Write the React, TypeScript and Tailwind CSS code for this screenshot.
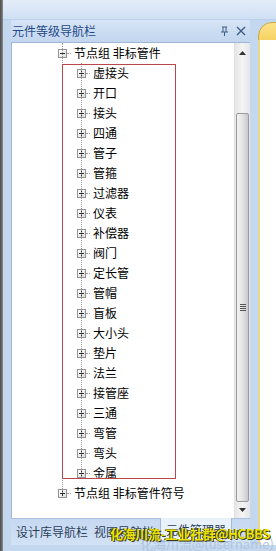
import React from 'react';

const children = [
  '虚接头', '开口', '接头', '四通', '管子', '管箍', '过滤器', '仪表', '补偿器', '阀门',
  '定长管', '管帽', '盲板', '大小头', '垫片', '法兰', '接管座', '三通', '弯管', '弯头', '金属',
];

function ExpandBox({ open }: { open?: boolean }) {
  return (
    <div className="w-[9px] h-[9px] flex-none border border-[#939393] bg-gradient-to-br from-white to-[#dcdcdc] flex items-center justify-center">
      <svg width="7" height="7" viewBox="0 0 7 7">
        <rect x="1" y="3" width="5" height="1" fill="#2b2b2b" />
        {!open && <rect x="3" y="1" width="1" height="5" fill="#2b2b2b" />}
      </svg>
    </div>
  );
}

function TreeRow({ label, open, indent }: { label: string; open?: boolean; indent: string }) {
  return (
    <div className={`h-[20px] flex items-center ${indent}`}>
      <ExpandBox open={open} />
      <div className="w-[4px] border-t border-dotted border-[#9a9a9a]" />
      <span className="ml-[3px] text-[12px] leading-none text-black whitespace-nowrap">{label}</span>
    </div>
  );
}

export default function App() {
  return (
    <div
      className="w-[276px] h-[551px] flex overflow-hidden bg-[#c3d7ef]"
      style={{ fontFamily: '"Noto Sans CJK SC", "Noto Sans", sans-serif' }}
    >
      {/* dark window edge */}
      <div className="w-[3px] flex-none bg-gradient-to-r from-[#4a4a4a] to-[#8a8a8a]" />

      <div className="flex-1 flex flex-col relative">
        {/* top band */}
        <div className="h-[20px] flex-none bg-gradient-to-b from-[#e3edf9] to-[#cfe0f4] border-b border-[#b9cfea]" />

        <div className="flex-1 flex">
          {/* left panel column */}
          <div className="w-[247px] flex-none flex flex-col pl-[8px]">
            {/* title bar */}
            <div className="h-[22px] flex-none flex items-center justify-between pl-[1px] pr-[4px] bg-gradient-to-b from-[#d6e4f6] to-[#c2d6ef]">
              <span className="text-[12px] leading-none text-[#1f4a85]">元件等级导航栏</span>
              <div className="flex items-center gap-[7px]">
                <svg width="9" height="10" viewBox="0 0 9 10">
                  <path d="M2 1h5M3 1v5M6 1v5M1 6h7M4.5 6v4" stroke="#3e5d86" strokeWidth="1" fill="none" />
                </svg>
                <svg width="10" height="10" viewBox="0 0 10 10">
                  <path d="M1 1l8 8M9 1l-8 8" stroke="#3e5d86" strokeWidth="1.4" fill="none" />
                </svg>
              </div>
            </div>

            {/* body */}
            <div className="h-[476px] flex-none flex bg-white border-t border-l border-[#9fb6d6]">
              <div className="flex-1 relative overflow-hidden">
                {/* root-level connector */}
                <div className="absolute left-[50px] top-0 h-[450px] border-l border-dotted border-[#9a9a9a]" />

                <TreeRow label="节点组 非标管件" open indent="pl-[46px]" />

                <div className="relative h-[416px] overflow-hidden">
                  <div className="absolute left-[69px] top-0 h-[416px] border-l border-dotted border-[#9a9a9a]" />
                  {children.map((c) => (
                    <TreeRow key={c} label={c} indent="pl-[65px]" />
                  ))}
                  {/* annotation box */}
                  <div className="absolute left-[50px] top-[1px] w-[114px] h-[415px] border border-[#b8484c]" />
                </div>

                <div className="h-[4px]" />
                <TreeRow label="节点组 非标管件符号" indent="pl-[46px]" />
              </div>

              {/* scrollbar */}
              <div className="w-[16px] flex-none flex flex-col bg-gradient-to-r from-[#e6e6e6] via-[#f4f4f4] to-[#e6e6e6] border-l border-[#e0e0e0]">
                <div className="h-[16px] flex-none flex items-center justify-center mt-[2px]">
                  <svg width="7" height="4" viewBox="0 0 7 4">
                    <path d="M0 4L3.5 0L7 4Z" fill="#333" />
                  </svg>
                </div>
                <div className="h-[52px] flex-none" />
                <div className="flex-1 mx-[1px] rounded-[2px] border border-[#9a9a9a] bg-gradient-to-r from-[#f2f2f2] via-[#e4e4e4] to-[#c9c9c9] flex items-center justify-center">
                  <div className="flex flex-col gap-[1px]">
                    <div className="w-[6px] h-[1px] bg-[#555]" />
                    <div className="w-[6px] h-[1px] bg-[#555]" />
                    <div className="w-[6px] h-[1px] bg-[#555]" />
                    <div className="w-[6px] h-[1px] bg-[#555]" />
                  </div>
                </div>
                <div className="h-[16px] flex-none flex items-center justify-center">
                  <svg width="7" height="4" viewBox="0 0 7 4">
                    <path d="M0 0L3.5 4L7 0Z" fill="#333" />
                  </svg>
                </div>
              </div>
            </div>

            {/* tabs */}
            <div className="h-[27px] flex-none flex items-stretch bg-gradient-to-b from-[#c6d9f1] to-[#d3e2f5] border-t border-[#a9c0e0]">
              <div className="pl-[5px] pr-[6px] flex items-center text-[12px] text-[#2c3e5c]">设计库导航栏</div>
              <div className="pr-[6px] flex items-center text-[12px] text-[#2c3e5c]">视图导航栏</div>
              <div className="-mt-[1px] mb-[3px] px-[5px] flex items-center text-[12px] text-[#2c3e5c] bg-[#e9f1fb] border-x border-b border-[#a3bbdc] rounded-b-[2px]">元件管理器</div>
            </div>
            <div className="flex-1" />
          </div>

          {/* document area at right */}
          <div className="flex-1 flex flex-col pl-[8px] pt-[2px]">
            <div className="h-[18px] flex-none relative overflow-hidden">
              <div className="absolute left-0 top-0 w-[40px] h-[30px] bg-gradient-to-b from-[#fbe38a] to-[#f3c745] border border-[#c9a84a] rounded-tl-[14px]" />
            </div>
            <div className="flex-1 bg-white border-l-2 border-[#e7d88f] mb-[6px]" />
          </div>
        </div>

        {/* watermark */}
        <div className="absolute left-[137px] top-[537px] text-[13px] leading-none text-[#b0c4de] whitespace-nowrap">化海川流@(username)</div>
        <div className="absolute left-[107px] top-[527px] text-[13px] font-bold leading-none tracking-[-0.4px] text-[#ece400] whitespace-nowrap [text-shadow:1px_1px_0_#3a3a20,-1px_0_0_#3a3a20]">化海川流-工业社群@HCBBS</div>
      </div>
    </div>
  );
}
